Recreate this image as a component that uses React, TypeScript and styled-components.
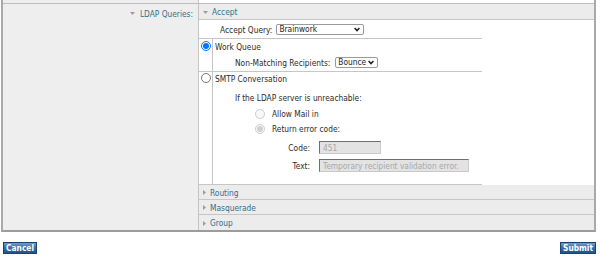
import * as React from 'react';
import styled, { createGlobalStyle } from 'styled-components';

const GlobalStyle = createGlobalStyle`
  html, body {
    margin: 0;
    padding: 0;
    background: #ffffff;
  }
  body {
    font-family: "DejaVu Sans Condensed", "DejaVu Sans", Verdana, sans-serif;
    font-stretch: condensed;
    font-size: 8.3px;
    color: #2b2b2b;
  }
`;

const Page = styled.div`
  width: 600px;
  height: 258px;
  overflow: hidden;
`;

const Frame = styled.div`
  margin-left: 1px;
  width: 591px;
  border: 2px solid #a9a9a9;
  border-top: none;
  border-bottom-color: #9c9c9c;
`;

const Row = styled.div<{ $height?: number }>`
  display: grid;
  grid-template-columns: 196px 1fr;
  height: ${(p) => (p.$height ? `${p.$height}px` : 'auto')};
  border-bottom: ${(p) => (p.$height ? '1px solid #bdbdbd' : 'none')};
`;

const LabelCell = styled.div`
  box-sizing: border-box;
  background: #eeeeee;
  border-right: 1px solid #c4c4c4;
  display: flex;
  justify-content: flex-end;
  align-items: flex-start;
  padding: 1px 5px 0 0;
`;

const BlankCell = styled.div`
  background: #ffffff;
`;

const LabelText = styled.span`
  box-sizing: border-box;
  display: flex;
  align-items: center;
  gap: 5px;
  height: 16px;
  padding-top: 1px;
  color: #30708d;
`;

const ValueCell = styled.div`
  display: flex;
  flex-direction: column;
`;

const Caret = styled.svg`
  flex: 0 0 auto;
  fill: #9c9c9c;
`;

const DownCaret = () => (
  <Caret width="5" height="3" viewBox="0 0 5 3">
    <polygon points="0,0 5,0 2.5,3" />
  </Caret>
);

const RightCaret = () => (
  <Caret width="3" height="5" viewBox="0 0 3 5">
    <polygon points="0,0 3,2.5 0,5" />
  </Caret>
);

const SectionHead = styled.div<{ $height: number; $last?: boolean }>`
  box-sizing: border-box;
  height: ${(p) => p.$height}px;
  display: flex;
  align-items: center;
  gap: 4px;
  padding: 1px 0 0 4px;
  background: #ececec;
  border-bottom: ${(p) => (p.$last ? 'none' : '1px solid #c6c6c6')};
  color: #30708d;
`;

const Panel = styled.div`
  display: grid;
  grid-template-columns: 14px 269px;
  width: 283px;
  border-bottom: 1px solid #c6c6c6;
`;

const QueryRow = styled.div`
  grid-column: 1 / span 2;
  box-sizing: border-box;
  height: 19px;
  display: flex;
  align-items: center;
  gap: 3px;
  padding: 1px 0 0 21px;
  border-bottom: 1px solid #c6c6c6;
`;

const RadioCell = styled.div<{ $line: number; $last?: boolean }>`
  box-sizing: border-box;
  border-right: 1px solid #c6c6c6;
  border-bottom: ${(p) => (p.$last ? 'none' : '1px solid #c6c6c6')};
  display: flex;
  justify-content: center;
  align-items: flex-start;
  & > div {
    height: ${(p) => p.$line}px;
    display: flex;
    align-items: center;
  }
`;

const OptionCell = styled.div<{ $bottom: number; $last?: boolean }>`
  display: flex;
  flex-direction: column;
  padding-bottom: ${(p) => p.$bottom}px;
  border-bottom: ${(p) => (p.$last ? 'none' : '1px solid #c6c6c6')};
`;

const Line = styled.div<{ $height: number; $top?: number; $indent?: number }>`
  box-sizing: border-box;
  height: ${(p) => p.$height}px;
  margin-top: ${(p) => p.$top ?? 0}px;
  padding-top: 1px;
  padding-left: ${(p) => p.$indent ?? 2}px;
  display: flex;
  align-items: center;
  gap: 4px;
`;

const Radio = styled.input.attrs({ type: 'radio' })`
  width: 10px;
  height: 10px;
  margin: 0;
`;

const SubRadio = styled(Radio)`
  margin-right: 3px;
`;

const SelectBox = styled.span`
  position: relative;
  display: inline-flex;
  margin-left: 1px;
`;

const Select = styled.select<{ $width: number }>`
  appearance: none;
  box-sizing: border-box;
  width: ${(p) => p.$width}px;
  height: 11px;
  padding: 0 0 0 2px;
  font: inherit;
  font-size: 8.3px;
  line-height: 9px;
  color: #222;
  border: 1px solid #9a9a9a;
  border-radius: 2px;
  background: #ffffff;
`;

const Chevron = styled.svg`
  position: absolute;
  right: 4px;
  top: 3px;
  pointer-events: none;
`;

const Dropdown = ({ width, value }: { width: number; value: string }) => (
  <SelectBox>
    <Select $width={width} defaultValue={value}>
      <option>{value}</option>
    </Select>
    <Chevron width="6" height="5" viewBox="0 0 6 5">
      <polyline points="0.6,1 3,3.6 5.4,1" fill="none" stroke="#1e1e1e" strokeWidth="1.5" />
    </Chevron>
  </SelectBox>
);

const FieldLabel = styled.span`
  width: 38px;
  text-align: right;
  margin-right: 5px;
`;

const TextInput = styled.input<{ $width: number }>`
  box-sizing: border-box;
  width: ${(p) => p.$width}px;
  height: 13px;
  margin: 0;
  padding: 0 3px;
  font: inherit;
  font-size: 8.3px;
  color: #a8a8a8;
  background: #e3e3e3;
  border: 1px solid #c9c9c9;
  border-top-color: #6e6e6e;
  border-left-color: #6e6e6e;
`;

const Actions = styled.div`
  display: flex;
  justify-content: space-between;
  margin-top: 10px;
  padding: 0 4px 0 3px;
`;

const Button = styled.button<{ $width: number }>`
  box-sizing: border-box;
  width: ${(p) => p.$width}px;
  height: 12px;
  padding: 0;
  font: inherit;
  font-size: 8.3px;
  font-weight: bold;
  line-height: 10px;
  color: #ffffff;
  border: 1px solid #1c416b;
  background: linear-gradient(#6f9dd0, #3a6ea8 45%, #22528a);
  cursor: pointer;
`;

export default function App() {
  return (
    <Page>
      <GlobalStyle />
      <Frame>
        <Row $height={3}>
          <LabelCell />
          <BlankCell />
        </Row>
        <Row>
          <LabelCell>
            <LabelText>
              <DownCaret />
              LDAP Queries:
            </LabelText>
          </LabelCell>
          <ValueCell>
            <SectionHead $height={16}>
              <DownCaret />
              Accept
            </SectionHead>
            <Panel>
              <QueryRow>
                Accept Query:
                <Dropdown width={88} value="Brainwork" />
              </QueryRow>

              <RadioCell $line={14}>
                <div>
                  <Radio name="accept" defaultChecked />
                </div>
              </RadioCell>
              <OptionCell $bottom={2}>
                <Line $height={14}>Work Queue</Line>
                <Line $height={14} $top={2} $indent={22}>
                  Non-Matching Recipients:
                  <Dropdown width={43} value="Bounce" />
                </Line>
              </OptionCell>

              <RadioCell $line={11} $last>
                <div>
                  <Radio name="accept" />
                </div>
              </RadioCell>
              <OptionCell $bottom={12} $last>
                <Line $height={12}>SMTP Conversation</Line>
                <Line $height={14} $top={6} $indent={22}>
                  If the LDAP server is unreachable:
                </Line>
                <Line $height={14} $top={2} $indent={42}>
                  <SubRadio name="unreach" disabled />
                  Allow Mail in
                </Line>
                <Line $height={14} $top={1} $indent={42}>
                  <SubRadio name="unreach" disabled defaultChecked />
                  Return error code:
                </Line>
                <Line $height={14} $top={5} $indent={59}>
                  <FieldLabel>Code:</FieldLabel>
                  <TextInput $width={62} disabled defaultValue="451" />
                </Line>
                <Line $height={14} $top={4} $indent={59}>
                  <FieldLabel>Text:</FieldLabel>
                  <TextInput $width={150} disabled defaultValue="Temporary recipient validation error." />
                </Line>
              </OptionCell>
            </Panel>
            <SectionHead $height={15}>
              <RightCaret />
              Routing
            </SectionHead>
            <SectionHead $height={15}>
              <RightCaret />
              Masquerade
            </SectionHead>
            <SectionHead $height={15} $last>
              <RightCaret />
              Group
            </SectionHead>
          </ValueCell>
        </Row>
      </Frame>
      <Actions>
        <Button $width={34}>Cancel</Button>
        <Button $width={36}>Submit</Button>
      </Actions>
    </Page>
  );
}
